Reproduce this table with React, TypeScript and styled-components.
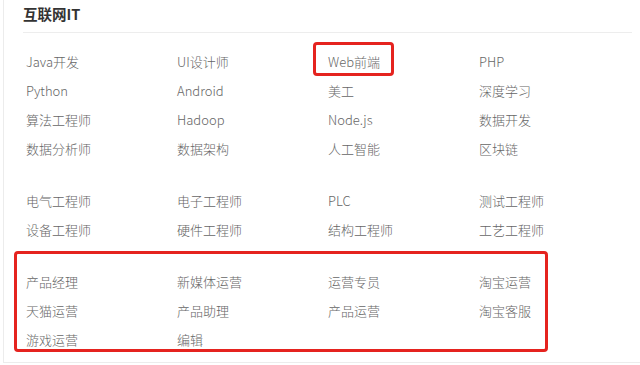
import styled, { createGlobalStyle } from "styled-components";

const GlobalStyle = createGlobalStyle`
  * {
    box-sizing: border-box;
  }
  body {
    margin: 0;
    background: #ffffff;
    font-family: "Noto Sans CJK SC", "Noto Sans", sans-serif;
  }
`;

const Card = styled.div`
  position: relative;
  width: 637px;
  height: 363px;
  margin-left: 3px;
  border-left: 1px solid #ececec;
  border-bottom: 1px solid #ececec;
  padding: 0 8px 0 19px;
`;

const Title = styled.div`
  height: 33px;
  padding-top: 4px;
  font-size: 14.5px;
  line-height: 20px;
  font-weight: 700;
  color: #333;
  border-bottom: 1px solid #ededed;
`;

const Groups = styled.div`
  padding: 14px 0 0 3px;
  display: flex;
  flex-direction: column;
  gap: 23px;
`;

const Grid = styled.ul`
  list-style: none;
  margin: 0;
  padding: 0;
  display: grid;
  grid-template-columns: repeat(4, 151px);
  grid-auto-rows: 29px;
`;

const Item = styled.li`
  font-size: 13px;
  line-height: 29px;
  font-weight: 300;
  color: #666;
  white-space: nowrap;
`;

// red outline drawn over a highlighted area
const Mark = styled.div<{ $x: number; $y: number; $w: number; $h: number }>`
  position: absolute;
  left: ${(p) => p.$x}px;
  top: ${(p) => p.$y}px;
  width: ${(p) => p.$w}px;
  height: ${(p) => p.$h}px;
  border: 3px solid #e5231f;
  border-radius: 4px;
  pointer-events: none;
`;

const groups: string[][] = [
  [
    "Java开发", "UI设计师", "Web前端", "PHP",
    "Python", "Android", "美工", "深度学习",
    "算法工程师", "Hadoop", "Node.js", "数据开发",
    "数据分析师", "数据架构", "人工智能", "区块链",
  ],
  [
    "电气工程师", "电子工程师", "PLC", "测试工程师",
    "设备工程师", "硬件工程师", "结构工程师", "工艺工程师",
  ],
  [
    "产品经理", "新媒体运营", "运营专员", "淘宝运营",
    "天猫运营", "产品助理", "产品运营", "淘宝客服",
    "游戏运营", "编辑",
  ],
];

export default function App() {
  return (
    <>
      <GlobalStyle />
      <Card>
        <Title>互联网IT</Title>
        <Groups>
          {groups.map((list, i) => (
            <Grid key={i}>
              {list.map((name) => (
                <Item key={name}>{name}</Item>
              ))}
            </Grid>
          ))}
        </Groups>
        <Mark $x={309} $y={42} $w={81} $h={34} />
        <Mark $x={10} $y={251} $w={534} $h={101} />
      </Card>
    </>
  );
}
